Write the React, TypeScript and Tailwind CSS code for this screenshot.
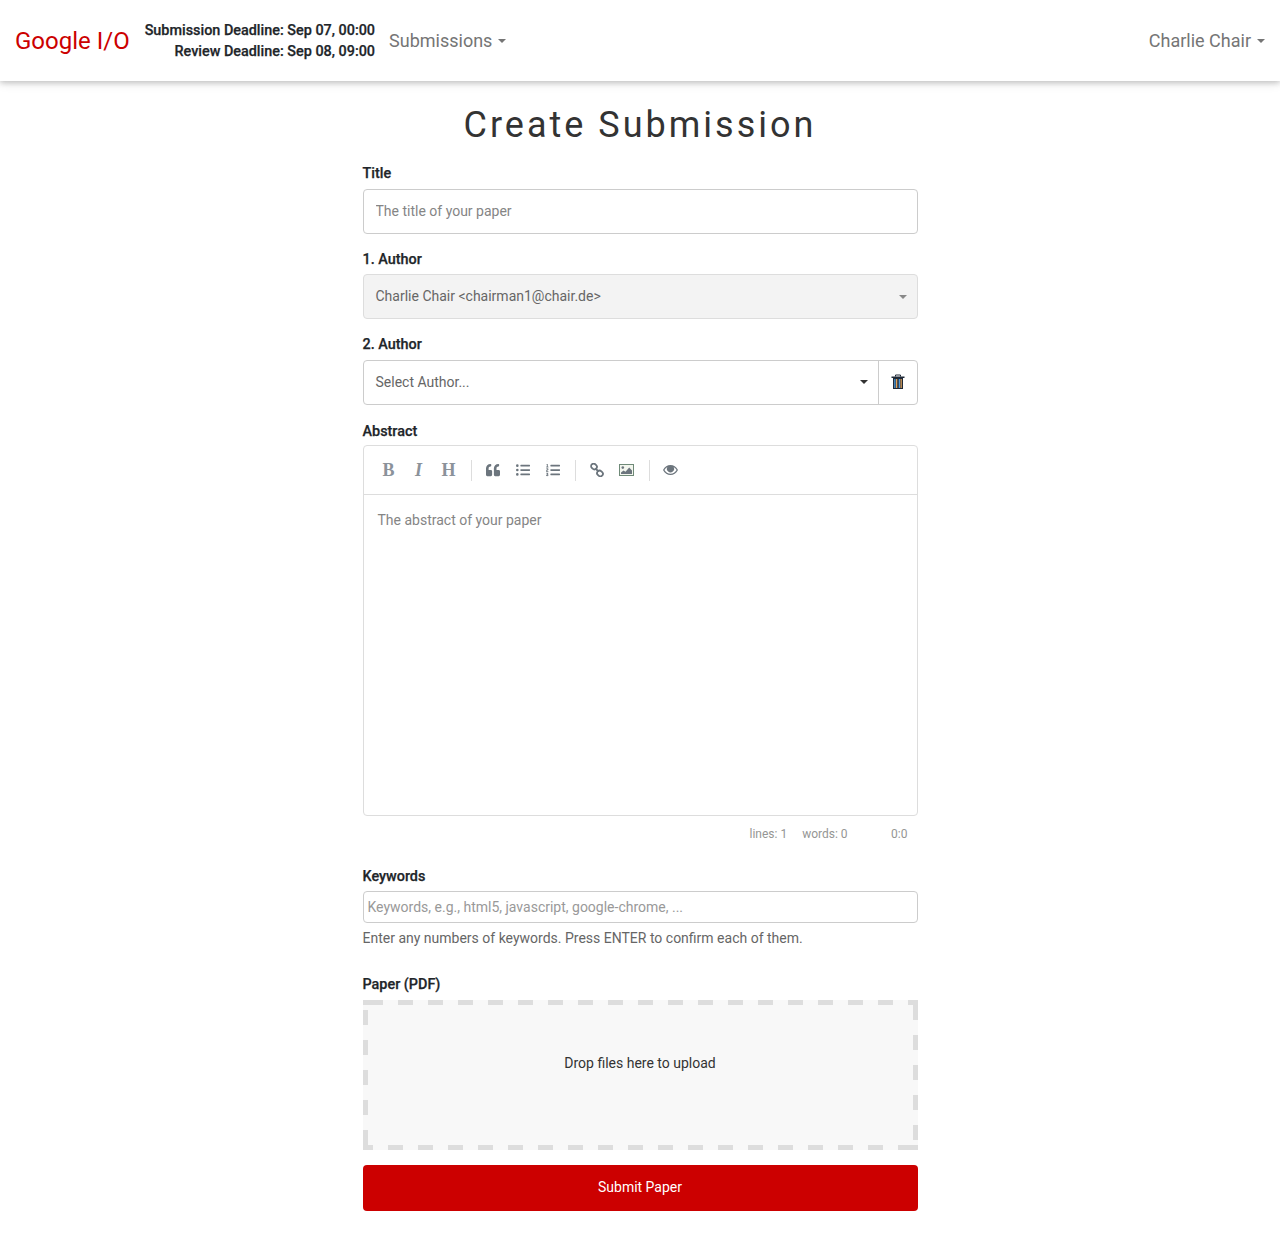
import { FaListOl, FaListUl, FaQuoteLeft } from "react-icons/fa";

const sans = "font-['Roboto',sans-serif]";

function Caret({ className = "" }: { className?: string }) {
    return <span className={`inline-block w-0 h-0 border-x-[4px] border-x-transparent border-t-[4px] ${className}`} />;
}

function Divider({ last }: { last?: boolean }) {
    return <i className={`ml-[7px] mr-[6px] w-px ${last ? "h-[21px]" : "h-[21px]"} bg-[#dddddd]`} />;
}

function ToolIcon({ children }: { children: React.ReactNode }) {
    return (
        <span className="w-[30px] h-[30px] flex items-center justify-center text-[#6c757d]">{children}</span>
    );
}

function Letter({ children, italic }: { children: string; italic?: boolean }) {
    return (
        <span className={`w-[30px] h-[30px] flex items-center justify-center text-[#8b929a] text-[18px] font-bold font-['Liberation_Serif',serif] ${italic ? "italic" : ""}`}>
            {children}
        </span>
    );
}

function Label({ children }: { children: string }) {
    return <label className="block mb-1 text-[14.4px] leading-[21.6px] font-medium text-[#212529] [-webkit-text-stroke:0.25px_#212529]">{children}</label>;
}

export default function App() {
    return (
        <div className={`${sans} bg-white min-h-[1250px] text-[14.4px] text-[#212529]`}>
            <nav className="h-[81px] flex items-center justify-between px-[15px] bg-white shadow-[0_2px_5px_rgba(0,0,0,0.16),0_2px_10px_rgba(0,0,0,0.12)]">
                <div className="flex items-center">
                    <a className="text-[24px] text-[#cc0000] mr-[15px] leading-[36px]">Google I/O</a>
                    <div className="text-right text-[14.4px] leading-[21px] font-medium text-[#212529] [-webkit-text-stroke:0.25px_#212529]">
                        <div>Submission Deadline: Sep 07, 00:00</div>
                        <div>Review Deadline: Sep 08, 09:00</div>
                    </div>
                    <a className="ml-[14px] flex items-center gap-[6px] text-[18px] text-[#757575]">
                        Submissions <Caret className="border-x-[4.5px] border-t-[4.5px] border-t-[#757575]" />
                    </a>
                </div>
                <a className="flex items-center gap-[6px] text-[18px] text-[#757575]">
                    Charlie Chair <Caret className="border-x-[4.5px] border-t-[4.5px] border-t-[#757575]" />
                </a>
            </nav>

            <main className="w-[555px] mx-auto">
                <h1 className="mt-[20px] mb-[14px] text-center text-[36px] leading-[48px] font-normal tracking-[3px] text-[#333333] whitespace-nowrap">Create Submission</h1>

                <Label>Title</Label>
                <input
                    placeholder="The title of your paper"
                    className="block w-full h-[45px] px-3 border border-[#cccccc] rounded-[4px] text-[14px] placeholder:text-[#858585] outline-none"
                />

                <div className="mt-[15px]">
                    <Label>1. Author</Label>
                    <div className="h-[45px] pl-3 pr-[10px] flex items-center justify-between bg-[#f3f3f3] border border-[#dddddd] rounded-[4px] text-[14px] text-[#666666]">
                        <span>{"Charlie Chair <chairman1@chair.de>"}</span>
                        <Caret className="border-t-[#888888]" />
                    </div>
                </div>

                <div className="mt-[15px]">
                    <Label>2. Author</Label>
                    <div className="h-[45px] flex border border-[#cccccc] rounded-[4px] text-[14px] text-[#666666]">
                        <div className="flex-1 pl-3 pr-[10px] flex items-center justify-between">
                            <span>Select Author...</span>
                            <Caret className="border-t-[#333333]" />
                        </div>
                        <button className="w-[39px] border-l border-[#cccccc] flex items-center justify-center">
                            <svg width="14" height="16" viewBox="0 0 14 16">
                                <path d="M4.500 2.500V1h5v1.500" fill="none" stroke="#1f2937" />
                                <rect x="0.500" y="2.500" width="13" height="1.500" fill="#1f2937" />
                                <rect x="2" y="4" width="10" height="11" fill="#1f2937" />
                                <rect x="3.200" y="5" width="1.300" height="9" fill="#4f9ad8" />
                                <rect x="5" y="5" width="1.300" height="9" fill="#e2a25a" />
                                <rect x="7.700" y="5" width="1.300" height="9" fill="#4f9ad8" />
                                <rect x="9.500" y="5" width="1.300" height="9" fill="#d9a05c" />
                            </svg>
                        </button>
                    </div>
                </div>

                <div className="mt-[16px]">
                    <Label>Abstract</Label>
                    <div className="-mt-px border border-[#dddddd] rounded-[4px] h-[371px] flex flex-col">
                        <div className="h-[49px] pl-[10px] flex items-center border-b border-[#dddddd] shrink-0">
                            <Letter>B</Letter>
                            <Letter italic>I</Letter>
                            <Letter>H</Letter>
                            <Divider />
                            <ToolIcon><FaQuoteLeft size={14} /></ToolIcon>
                            <ToolIcon><FaListUl size={14} /></ToolIcon>
                            <ToolIcon><FaListOl size={14} /></ToolIcon>
                            <Divider />
                            <ToolIcon>
                                <svg width="14" height="14" viewBox="0 0 14 14" fill="none" stroke="currentColor" strokeWidth="1.800">
                                    <rect x="1" y="1" width="6" height="5" rx="2.400" transform="rotate(45 4 3.500)" />
                                    <rect x="7" y="8" width="6" height="5" rx="2.400" transform="rotate(45 10 10.500)" />
                                    <path d="M5.500 5.500l3 3" />
                                </svg>
                            </ToolIcon>
                            <ToolIcon>
                                <svg width="15" height="12" viewBox="0 0 15 12">
                                    <rect x="0.500" y="0.500" width="14" height="11" fill="#f3f6ee" stroke="#6f8a78" />
                                    <circle cx="3.800" cy="3.600" r="1.300" fill="#6c757d" />
                                    <path d="M2 10V8.500l2.500-2 2 1.300L10.200 3.500 13 6.500V10z" fill="#6c757d" />
                                </svg>
                            </ToolIcon>
                            <Divider />
                            <ToolIcon>
                                <svg width="15" height="10" viewBox="0 0 15 10" fill="currentColor">
                                    <path fillRule="evenodd" d="M0 5c1.800-3.200 4.400-5 7.500-5S13.200 1.800 15 5c-1.800 3.200-4.400 5-7.500 5S1.800 8.200 0 5zm1.400 0c1.400 2.200 3.500 3.800 6.100 3.800S12.200 7.200 13.600 5C12.800 3.600 11.800 2.600 10.600 2a3.600 3.600 0 11-6.200 0C3.200 2.600 2.200 3.600 1.400 5z" />
                                </svg>
                            </ToolIcon>
                        </div>
                        <div className="px-[14px] pt-[15px] text-[14px] leading-[20px] text-[#858585]">The abstract of your paper</div>
                    </div>
                    <div className="h-[36px] flex items-center text-[12px] text-[#959694] pl-[387px]">
                        <span>lines: 1</span>
                        <span className="ml-[15px]">words: 0</span>
                        <span className="ml-auto mr-[10px]">0:0</span>
                    </div>
                </div>

                <div className="mt-[14px]">
                    <Label>Keywords</Label>
                    <input
                        placeholder="Keywords, e.g., html5, javascript, google-chrome, ..."
                        className="block -mt-px w-full h-[32px] px-1 border border-[#cccccc] rounded-[4px] text-[14px] placeholder:text-[#999999] outline-none"
                    />
                    <p className="mt-[5px] text-[14px] leading-[21px] text-[#666666]">Enter any numbers of keywords. Press ENTER to confirm each of them.</p>
                </div>

                <div className="mt-[25px]">
                    <Label>Paper (PDF)</Label>
                    <div className="relative h-[150px] bg-[#f8f8f8] flex items-center justify-center text-[14px] pb-[22px] text-[#333333]">
                        Drop files here to upload
                        <svg className="absolute inset-0" width="555" height="150" fill="none" stroke="#dddddd" strokeWidth="5">
                            <path d="M0 2.500H5" />
                            <path d="M5 2.500H555" strokeDasharray="15 15" />
                            <path d="M0 147.500H10" />
                            <path d="M25 147.500H555" strokeDasharray="15 15" />
                            <path d="M550 147.500H555" />
                            <path d="M2.500 10V150" strokeDasharray="15 15" />
                            <path d="M552.500 5V150" strokeDasharray="15 15" />
                        </svg>
                    </div>
                </div>

                <button className="mt-[15px] w-full h-[46px] bg-[#cc0000] text-white text-[14px] rounded-[4px]">Submit Paper</button>
            </main>
        </div>
    );
}
